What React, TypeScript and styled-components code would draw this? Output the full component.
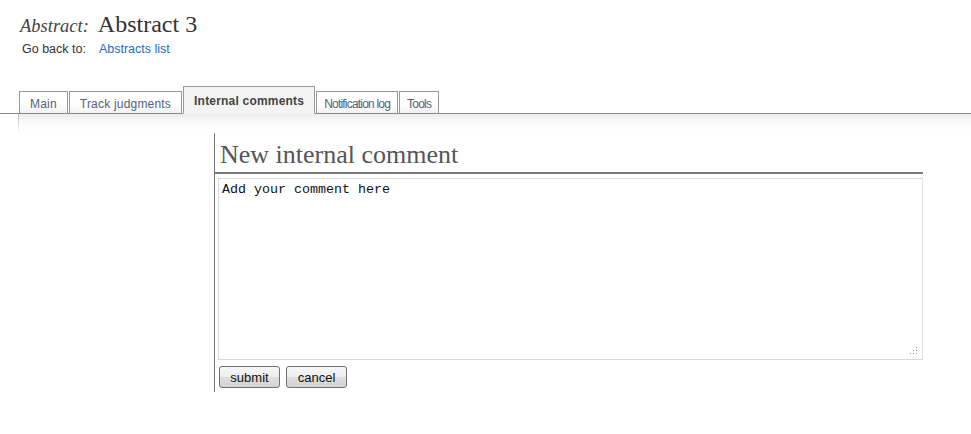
import styled, { createGlobalStyle } from 'styled-components';

const GlobalStyle = createGlobalStyle`
  body {
    margin: 0;
    background: #fff;
    font-family: 'Liberation Sans', Arial, sans-serif;
    color: #333;
  }
`;

const tabs = [
  { label: 'Main' },
  { label: 'Track judgments' },
  { label: 'Internal comments', active: true },
  { label: 'Notification log', tight: true },
  { label: 'Tools', tight: true },
];

export default function App() {
  return (
    <Page>
      <GlobalStyle />
      <Header>
        <TitleRow>
          <TitleLabel>Abstract:</TitleLabel>
          <TitleText>Abstract 3</TitleText>
        </TitleRow>
        <BackRow>
          <span>Go back to:</span>
          <BackLink href="#">Abstracts list</BackLink>
        </BackRow>
      </Header>

      <TabBar>
        {tabs.map((tab) => (
          <Tab key={tab.label} active={!!tab.active} tight={!!tab.tight}>
            {tab.label}
          </Tab>
        ))}
      </TabBar>
      <TabShadow />

      <Content>
        <Column>
          <Heading>New internal comment</Heading>
          <BoxWrap>
            <CommentBox defaultValue="Add your comment here" />
            <Grip width="8" height="8" viewBox="0 0 8 8">
              <rect x="6" y="0" width="1" height="1" />
              <rect x="3" y="3" width="1" height="1" />
              <rect x="6" y="3" width="1" height="1" />
              <rect x="0" y="6" width="1" height="1" />
              <rect x="3" y="6" width="1" height="1" />
              <rect x="6" y="6" width="1" height="1" />
            </Grip>
          </BoxWrap>
          <Buttons>
            <Button>submit</Button>
            <Button>cancel</Button>
          </Buttons>
        </Column>
      </Content>
    </Page>
  );
}

const Page = styled.div`
  width: 971px;
  height: 434px;
  overflow: hidden;
`;

const Header = styled.div`
  padding: 11px 0 0 20px;
`;

const TitleRow = styled.div`
  display: flex;
  align-items: baseline;
  gap: 9px;
  height: 27px;
`;

const TitleLabel = styled.span`
  font-family: 'Liberation Serif', 'Times New Roman', serif;
  font-style: italic;
  font-size: 18.5px;
  color: #444;
`;

const TitleText = styled.span`
  font-family: 'Liberation Serif', 'Times New Roman', serif;
  font-size: 24px;
  color: #333;
`;

const BackRow = styled.div`
  display: flex;
  gap: 13px;
  padding: 4px 0 0 2px;
  font-size: 12.5px;
  color: #333;
`;

const BackLink = styled.a`
  color: #1a6ec0;
  text-decoration: none;
`;

const TabBar = styled.div`
  display: flex;
  align-items: flex-end;
  gap: 1px;
  margin-top: 30px;
  padding-left: 19px;
  height: 27px;
  border-bottom: 1px solid #8a8a8a;
`;

const Tab = styled.div<{ active: boolean; tight: boolean }>`
  box-sizing: border-box;
  height: ${({ active }) => (active ? '28px' : '22px')};
  margin-bottom: ${({ active }) => (active ? '-1px' : '0')};
  padding: ${({ tight }) => (tight ? '2px 7px 0' : '2px 10px 0')};
  display: flex;
  align-items: center;
  font-size: 12px;
  letter-spacing: ${({ tight }) => (tight ? '-0.8px' : '0.2px')};
  font-weight: ${({ active }) => (active ? 'bold' : 'normal')};
  color: ${({ active }) => (active ? '#444' : '#55607a')};
  background: ${({ active }) =>
    active ? '#f3f3f3' : 'linear-gradient(#fff 60%, #f1f1f1)'};
  border: 1px solid #999;
  border-bottom: ${({ active }) => (active ? '1px solid #f3f3f3' : 'none')};
`;

const TabShadow = styled.div`
  margin-left: 18px;
  height: 19px;
  border-left: 1px solid #b8b8b8;
  background: linear-gradient(#ececec, #fff);
  mask-image: linear-gradient(#000, transparent);
`;

const Content = styled.div`
  padding-left: 214px;
`;

const Column = styled.div`
  width: 709px;
  height: 259px;
  border-left: 1px solid #777;
  box-sizing: border-box;
`;

const Heading = styled.h2`
  margin: 0;
  padding: 7px 0 3px 5px;
  font-family: 'Liberation Serif', 'Times New Roman', serif;
  font-size: 26px;
  font-weight: normal;
  color: #555;
  border-bottom: 2px solid #7a7a7a;
  line-height: 29px;
`;

const BoxWrap = styled.div`
  position: relative;
  margin: 4px 0 0 3px;
  width: 705px;
`;

const CommentBox = styled.textarea`
  display: block;
  box-sizing: border-box;
  width: 705px;
  height: 182px;
  padding: 3px 3px;
  border: 1px solid #d9d9d9;
  border-right-color: #e4e4e4;
  font-family: 'Liberation Mono', 'Courier New', monospace;
  font-size: 13.33px;
  color: #111;
  resize: none;
  outline: none;
`;

const Grip = styled.svg`
  position: absolute;
  right: 5px;
  bottom: 5px;
  fill: #9a9a9a;
`;

const Buttons = styled.div`
  display: flex;
  gap: 6px;
  margin: 6px 0 0 4px;
`;

const Button = styled.button`
  height: 22px;
  width: 61px;
  padding: 0;
  font-family: 'Liberation Sans', Arial, sans-serif;
  font-size: 13px;
  color: #111;
  border: 1px solid #707070;
  border-radius: 3px;
  background: linear-gradient(#f6f6f6 0%, #ededed 50%, #dedede 51%, #d3d3d3 100%);
`;
